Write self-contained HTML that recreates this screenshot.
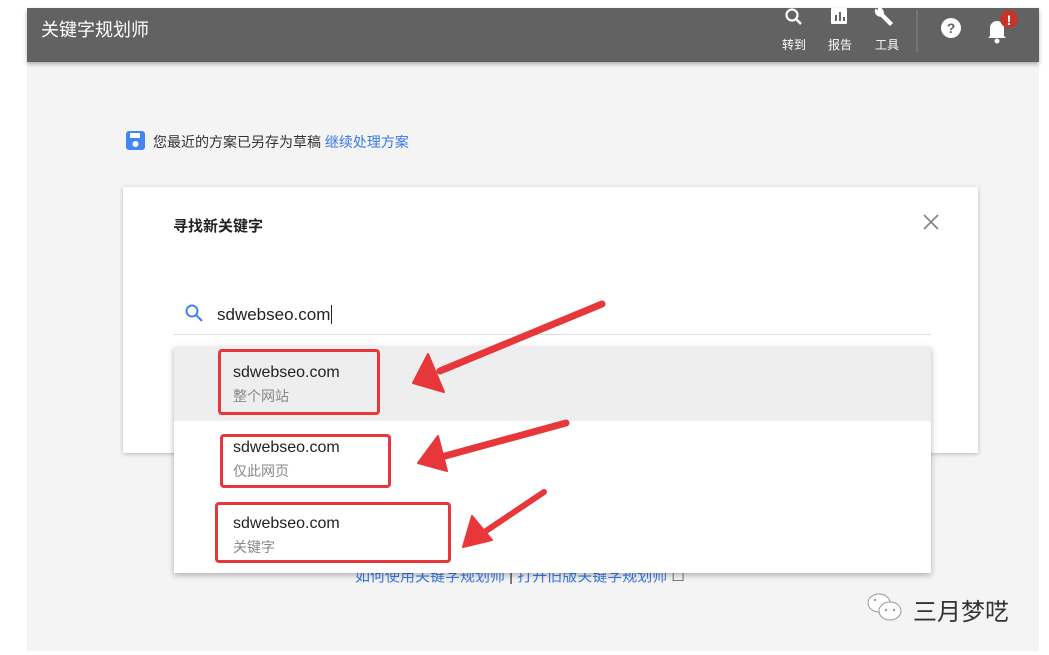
<!DOCTYPE html>
<html><head><meta charset="utf-8"><style>
body{margin:0;width:1049px;height:655px;background:#fff;position:relative;overflow:hidden;font-family:"Liberation Sans","Noto Sans CJK SC",sans-serif}
.a{position:absolute}
</style></head><body>
<div class="a" style="left:27px;top:62px;width:1012px;height:589px;background:#f4f4f4"></div>
<div class="a" style="left:27px;top:8px;width:1012px;height:54px;background:#626262;box-shadow:0 2px 4px rgba(0,0,0,.3)"></div>
<div class="a" style="left:41px;top:16px;color:#fff;font-size:18px">关键字规划师</div>
<svg class="a" style="left:780px;top:8px" width="260" height="50">
<circle cx="12" cy="7" r="5.5" fill="none" stroke="#fff" stroke-width="2.2"/><line x1="16" y1="11" x2="21" y2="16" stroke="#fff" stroke-width="2.5"/>
<rect x="51" y="0" width="16" height="16" fill="#fff" rx="1"/><rect x="55" y="7" width="2" height="6" fill="#626262"/><rect x="59" y="4" width="2" height="9" fill="#626262"/><rect x="63" y="9" width="2" height="4" fill="#626262"/>
<path d="M96 1 a5 5 0 0 0 5 7 l9 9 l2 -2 l-9 -9 a5 5 0 0 0 -4 -6 l-1 3 l-2 0z" fill="#fff" stroke="#fff" stroke-width="1.5"/>
<line x1="137" y1="2" x2="137" y2="44" stroke="#888"/>
<circle cx="171" cy="20" r="10" fill="#fff"/><text x="171" y="25" font-size="14" font-weight="bold" fill="#626262" text-anchor="middle" font-family="Liberation Sans">?</text>
<path d="M210 28 v-8 a7 7 0 0 1 14 0 v8 l2 2 h-18z" fill="#fff"/><circle cx="217" cy="33" r="2.5" fill="#fff"/>
<circle cx="229" cy="11" r="9" fill="#c5352a"/><text x="229" y="17" font-size="14" font-weight="bold" fill="#fff" text-anchor="middle" font-family="Liberation Sans">!</text>
</svg>
<div class="a" style="left:782px;top:36px;color:#fff;font-size:12px">转到</div>
<div class="a" style="left:828px;top:36px;color:#fff;font-size:12px">报告</div>
<div class="a" style="left:875px;top:36px;color:#fff;font-size:12px">工具</div>
<svg class="a" style="left:126px;top:131px" width="20" height="20"><rect x="0" y="0" width="19" height="19" rx="3" fill="#4285f4"/><rect x="4" y="2" width="10" height="5" fill="#fff"/><circle cx="9.5" cy="13" r="3" fill="#fff"/></svg>
<div class="a" style="left:153px;top:132px;font-size:14px;color:#333">您最近的方案已另存为草稿 <span style="color:#3b78e7">继续处理方案</span></div>
<div class="a" style="left:123px;top:187px;width:855px;height:266px;background:#fff;box-shadow:0 1px 4px rgba(0,0,0,.25)"></div>
<div class="a" style="left:173px;top:215px;font-size:15px;font-weight:bold;color:#222">寻找新关键字</div>
<svg class="a" style="left:922px;top:213px" width="18" height="18"><path d="M2 2L16 16M16 2L2 16" stroke="#888" stroke-width="1.8"/></svg>
<svg class="a" style="left:185px;top:304px" width="20" height="20"><circle cx="7" cy="7" r="5.5" fill="none" stroke="#4285f4" stroke-width="2"/><line x1="11" y1="11" x2="17" y2="17" stroke="#4285f4" stroke-width="2.2"/></svg>
<div class="a" style="left:217px;top:305px;font-size:17px;color:#222">sdwebseo.com<span style="border-left:1px solid #222;margin-left:1px"></span></div>
<div class="a" style="left:174px;top:334px;width:757px;height:1px;background:#ddd"></div>
<div class="a" style="left:355px;top:565px;font-size:15px;color:#3b78e7">如何使用关键字规划师 <span style="color:#333">|</span> 打开旧版关键字规划师 <span style="color:#555">☐</span></div>
<div class="a" style="left:174px;top:347px;width:757px;height:226px;background:#fff;box-shadow:0 2px 6px rgba(0,0,0,.3)"></div>
<div class="a" style="left:174px;top:347px;width:757px;height:74px;background:#eee"></div>
<div class="a" style="left:233px;top:364px;font-size:16px;color:#222">sdwebseo.com</div>
<div class="a" style="left:233px;top:386px;font-size:14px;color:#888">整个网站</div>
<div class="a" style="left:233px;top:439px;font-size:16px;color:#222">sdwebseo.com</div>
<div class="a" style="left:233px;top:461px;font-size:14px;color:#888">仅此网页</div>
<div class="a" style="left:233px;top:515px;font-size:16px;color:#222">sdwebseo.com</div>
<div class="a" style="left:233px;top:537px;font-size:14px;color:#888">关键字</div>
<div class="a" style="left:218px;top:349px;width:162px;height:66px;border:3px solid #e8373a;border-radius:4px;box-sizing:border-box"></div>
<div class="a" style="left:220px;top:434px;width:171px;height:54px;border:3px solid #e8373a;border-radius:4px;box-sizing:border-box"></div>
<div class="a" style="left:215px;top:502px;width:236px;height:61px;border:3px solid #e8373a;border-radius:4px;box-sizing:border-box"></div>
<svg class="a" style="left:0;top:0" width="1049" height="655">
<g fill="#e8373a" stroke="#e8373a" stroke-linecap="round" stroke-linejoin="round">
<line x1="602" y1="304" x2="440" y2="371" stroke-width="7"/><polygon points="413,383 428,354 444,392" stroke-width="2"/>
<line x1="566" y1="423" x2="445" y2="456" stroke-width="7"/><polygon points="418,463 438,436 447,471" stroke-width="2"/>
<line x1="544" y1="492" x2="480" y2="535" stroke-width="6"/><polygon points="463,547 472,516 492,540" stroke-width="2"/>
</g></svg>
<svg class="a" style="left:865px;top:590px" width="45" height="36"><ellipse cx="14" cy="13" rx="11" ry="9" fill="#fff" stroke="#999"/><ellipse cx="25" cy="21" rx="11" ry="9" fill="#fff" stroke="#999"/><circle cx="21" cy="20" r="1.2" fill="#999"/><circle cx="29" cy="20" r="1.2" fill="#999"/><circle cx="10" cy="10" r="1.2" fill="#999"/></svg>
<div class="a" style="left:913px;top:592px;font-size:24px;color:#333">三月梦呓</div>
</body></html>
